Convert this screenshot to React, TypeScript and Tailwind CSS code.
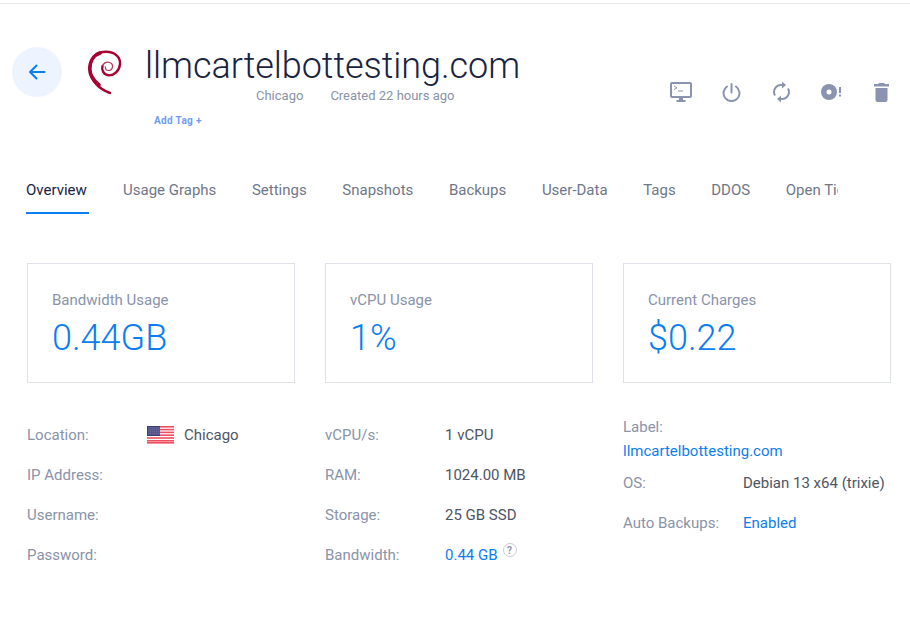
import React from "react";

const Flag = () => (
  <svg width="27" height="18" viewBox="0 0 27 18" className="shrink-0">
    <rect width="27" height="18" fill="#fff" />
    {[0, 2.8, 5.6, 8.4, 11.2, 14, 16].map((y) => (
      <rect key={y} x="0" y={y} width="27" height="1.6" fill="#ee4f5f" />
    ))}
    <rect width="13" height="10" fill="#3c3b7a" />
    {[1.5, 3.5, 5.5, 7.5].map((y) =>
      [1.5, 3.5, 5.5, 7.5, 9.5, 11.5].map((x) => (
        <rect key={`${x}-${y}`} x={x} y={y} width="0.9" height="0.9" fill="#d8d8ee" />
      ))
    )}
  </svg>
);

const Debian = () => (
  <svg width="36" height="46" viewBox="0 0 36 46" className="shrink-0">
    <path
      d="M23 44 C12 40 2.800 31 2.800 20 C2.800 9 9.500 2.800 19 2.800 C28 2.800 33.500 8 33 15 C32.500 22 27 26.800 21.500 26.300 C16.500 25.800 14.300 21 15.500 17"
      fill="none"
      stroke="#a80030"
      strokeWidth="2.400"
      strokeLinecap="round"
    />
    <path d="M12 36 C6 31 2.800 26 2.800 20 C2.800 12 7 6 13 4" fill="none" stroke="#a80030" strokeWidth="3.600" strokeLinecap="round" />
    <path d="M15.500 17 C16.500 13 21.500 12 24.500 14.500 C27 17 25 21.500 21.500 21.500 C19 21.500 18 19.500 18.500 17.500" fill="none" stroke="#b83a5c" strokeWidth="1.200" />
  </svg>
);

const Row = ({ label, children }: { label: string; children?: React.ReactNode }) => (
  <div className="flex h-10 items-center text-[15px]">
    <div className="w-[120px] shrink-0 text-[#8a93a8]">{label}</div>
    <div className="flex items-center text-[#4d5564]">{children}</div>
  </div>
);

const Card = ({ title, value }: { title: string; value: string }) => (
  <div className="h-[120px] w-[268px] border border-[#dfe2e8] pl-6 pt-[26px]">
    <div className="text-[15px] leading-[20px] text-[#8a93a8]">{title}</div>
    <div className="mt-[7px] text-[36px] font-light leading-[42px] text-[#0d7df2]">{value}</div>
  </div>
);

const tabs = ["Usage Graphs", "Settings", "Snapshots", "Backups", "User-Data", "Tags", "DDOS", "Open Tickets"];

export default function App() {
  return (
    <div className="h-[630px] w-[910px] overflow-hidden bg-white font-['Roboto',sans-serif]">
      <div className="h-[4px] border-b border-[#e6e7eb]" />

      <div className="flex h-[132px] justify-between pl-3 pr-[21px]">
        <div className="flex">
          <div className="mt-[43px] flex h-[50px] w-[50px] items-center justify-center rounded-full bg-[#edf3ff]">
            <svg width="18" height="16" viewBox="0 0 18 16" fill="none" stroke="#0d7df2" strokeWidth="2" strokeLinecap="round" strokeLinejoin="round">
              <path d="M16.500 8H2M8.500 1.500L2 8l6.500 6.500" />
            </svg>
          </div>
          <div className="ml-[25px] mt-[45px]"><Debian /></div>
          <div className="ml-[22px] mt-[39px] flex flex-col">
            <div className="text-[36px] font-light leading-[46px] tracking-[-0.05px] text-[#1a2340]">llmcartelbottesting.com</div>
            <div className="ml-[111px] -mt-[2px] flex gap-[27px] text-[13px] leading-[18px] text-[#8a93a8]">
              <span>Chicago</span>
              <span>Created 22 hours ago</span>
            </div>
            <div className="ml-[9px] mt-[9px] text-[10px] font-bold leading-[14px] tracking-[0.35px] text-[#6c9cf2]">Add Tag +</div>
          </div>
        </div>

        <div className="mt-[76px] flex h-6 items-center gap-[30px]">
          <svg width="22" height="20" viewBox="0 0 22 20" fill="none">
            <rect x="1" y="1" width="20" height="14" rx="1" stroke="#8a93b0" strokeWidth="2" />
            <path d="M4 4l3 1.800L4 7.600" stroke="#8a93b0" strokeWidth="1" />
            <path d="M8 9h5" stroke="#8a93b0" strokeWidth="1" />
            <path d="M9 16h4v2h-4zM6.500 18h9v2h-9z" fill="#8a93b0" />
          </svg>
          <svg width="19" height="19" viewBox="0 0 19 19" fill="none" stroke="#8a93b0" strokeWidth="2" strokeLinecap="round">
            <path d="M9.500 1V9.500" />
            <path d="M5 3.500a8 8 0 1 0 9 0" />
          </svg>
          <svg width="19" height="22" viewBox="0 0 19 22" fill="none" stroke="#8a93b0" strokeWidth="2" className="ml-[1px]">
            <path d="M3 14.500A7 7 0 0 1 9 4h2" />
            <path d="M16 7.500A7 7 0 0 1 10 18H8" />
            <path d="M10 0.500L14 4l-4 3.500z" fill="#8a93b0" stroke="none" />
            <path d="M9 14.500L5 18l4 3.500z" fill="#8a93b0" stroke="none" />
          </svg>
          <svg width="20" height="16" viewBox="0 0 20 16">
            <circle cx="8" cy="8" r="8" fill="#8a93b0" />
            <circle cx="8" cy="8" r="2.500" fill="#fff" />
            <rect x="18" y="3" width="2" height="6" fill="#8a93b0" />
            <rect x="18" y="10.500" width="2" height="2" fill="#8a93b0" />
          </svg>
          <svg width="15" height="19" viewBox="0 0 15 19" fill="#8a93b0" className="ml-[3px]">
            <path d="M5 0h5l1 1h4v2.500H0V1h4z" />
            <path d="M1.500 5h12v12a2 2 0 0 1-2 2h-8a2 2 0 0 1-2-2z" />
          </svg>
        </div>
      </div>

      <div className="ml-[8px] flex h-[78px] w-[830px] overflow-hidden whitespace-nowrap text-[15px] leading-[20px]">
        <div className="flex h-[78px] shrink-0 flex-col px-[18px] pt-[44px] text-[#1a2340]">
          <span>Overview</span>
          <span className="mt-[12px] block h-[2px] w-[63px] shrink-0 bg-[#0d7df2]" />
        </div>
        <div className="ml-[16px] flex gap-[35.6px] pt-[44px] text-[#6f7787]">
          {tabs.map((t) => (
            <span key={t}>{t}</span>
          ))}
        </div>
      </div>

      <div className="ml-[27px] mt-[49px] flex gap-[30px]">
        <Card title="Bandwidth Usage" value="0.44GB" />
        <Card title="vCPU Usage" value="1%" />
        <Card title="Current Charges" value="$0.22" />
      </div>

      <div className="ml-[27px] mt-[32px] flex gap-[30px]">
        <div className="w-[268px]">
          <Row label="Location:">
            <Flag />
            <span className="ml-[10px]">Chicago</span>
          </Row>
          <Row label="IP Address:" />
          <Row label="Username:" />
          <Row label="Password:" />
        </div>
        <div className="w-[268px]">
          <Row label="vCPU/s:">1 vCPU</Row>
          <Row label="RAM:">1024.00 MB</Row>
          <Row label="Storage:">25 GB SSD</Row>
          <Row label="Bandwidth:">
            <span className="text-[#0d7df2]">0.44 GB</span>
            <span className="relative -top-[5px] ml-[5px] flex h-[14px] w-[14px] items-center justify-center rounded-full border border-[#c9ccd3] text-[10px] font-bold text-[#8a93a8]">?</span>
          </Row>
        </div>
        <div className="w-[268px] text-[15px]">
          <div className="mt-[2px] leading-[20px] text-[#8a93a8]">Label:</div>
          <div className="mt-[4px] leading-[20px] text-[#0d7df2]">llmcartelbottesting.com</div>
          <div className="mt-[2px] flex h-10 items-center">
            <div className="w-[120px] text-[#8a93a8]">OS:</div>
            <div className="text-[#4d5564]">Debian 13 x64 (trixie)</div>
          </div>
          <div className="flex h-10 items-center">
            <div className="w-[120px] text-[#8a93a8]">Auto Backups:</div>
            <div className="text-[#0d7df2]">Enabled</div>
          </div>
        </div>
      </div>
    </div>
  );
}
